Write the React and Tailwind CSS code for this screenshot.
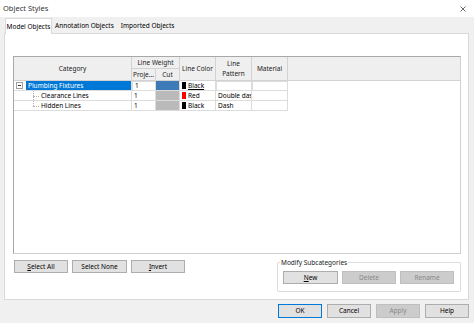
import React from "react";

function Btn({ children, className = "", disabled = false, primary = false }) {
  return (
    <div
      className={
        "flex items-center justify-center border " +
        (disabled
          ? "bg-[#cccccc] border-[#bfbfbf] text-[#8a8a8a] "
          : primary
          ? "bg-[#e1e1e1] border-[#0078d7] text-black "
          : "bg-[#e1e1e1] border-[#adadad] text-black ") +
        className
      }
    >
      {children}
    </div>
  );
}

function H({ children, className = "" }) {
  return (
    <div
      className={
        "bg-[#efefef] border-r border-b border-[#d2d2d2] flex items-center justify-center text-center leading-[8px] text-[#222] overflow-hidden " +
        className
      }
    >
      {children}
    </div>
  );
}

function C({ children, className = "" }) {
  return (
    <div
      className={
        "border-r border-b border-[#dcdcdc] flex items-center overflow-hidden whitespace-nowrap " +
        className
      }
    >
      {children}
    </div>
  );
}

function Swatch({ color }) {
  return <div className={"w-[4px] h-[7px] ml-[2px] mr-[2px] shrink-0 " + color} />;
}

export default function App() {
  return (
    <div className="w-[474px] h-[323px] overflow-hidden bg-[#f0f0f0] flex flex-col font-['Noto_Sans',sans-serif] text-[6.5px] text-black">
      {/* title bar */}
      <div className="h-[17px] bg-white flex items-center justify-between pl-[3px] pr-[8px] shrink-0">
        <span className="text-[7.5px] text-[#333]">Object Styles</span>
        <svg width="6" height="6" viewBox="0 0 6 6">
          <path d="M0.5 0.5 L5.5 5.5 M5.5 0.5 L0.5 5.5" stroke="#444" strokeWidth="0.8" />
        </svg>
      </div>

      {/* tabs */}
      <div className="h-[16px] flex items-end pl-[5px] shrink-0">
        <div className="h-[16px] w-[47px] bg-white border border-b-0 border-[#d9d9d9] flex items-center justify-center relative top-[1px]">
          Model Objects
        </div>
        <div className="h-[15px] px-[3px] flex items-center">Annotation Objects</div>
        <div className="h-[15px] px-[4px] flex items-center">Imported Objects</div>
      </div>

      {/* panel */}
      <div className="ml-[4px] w-[465px] h-[267px] bg-white border border-[#d9d9d9] pl-[8px] pt-[22px] shrink-0">
        <div className="w-[448px] h-[198px] border border-[#a8a8a8] border-r-[#d0d0d0] border-b-[#d0d0d0]">
          <div className="grid grid-cols-[118px_24px_24px_36px_36px_36px_1fr] grid-rows-[12px_12px_10px_10px_10px]">
            <H className="row-span-2">Category</H>
            <H className="col-span-2">Line Weight</H>
            <H className="row-span-2">Line Color</H>
            <H className="row-span-2 flex-col gap-[2px]">
              <span className="leading-[8px]">Line</span>
              <span className="leading-[8px]">Pattern</span>
            </H>
            <H className="row-span-2">Material</H>
            <H className="row-span-2 border-r-0" />
            <H className="justify-start pl-[1px]">Proje...</H>
            <H>Cut</H>

            {/* row 1 */}
            <C>
              <div className="w-[7px] h-[7px] ml-[2px] border border-[#a0a0a0] bg-white flex items-center justify-center shrink-0">
                <div className="w-[3px] h-[1px] bg-[#333]" />
              </div>
              <div className="ml-[3px] h-full flex-1 bg-[#0078d7] text-white flex items-center pl-[2px]">
                Plumbing Fixtures
              </div>
            </C>
            <C className="border border-[#5b9bd5] pl-[2px]">1</C>
            <C className="bg-[#3d7bb8]" />
            <C>
              <Swatch color="bg-black" />
              <span className="underline">Black</span>
            </C>
            <C className="border border-[#5b9bd5]" />
            <C className="border border-[#5b9bd5]" />
            <div />

            {/* row 2 */}
            <C className="relative">
              <div className="absolute left-[19px] top-0 h-full border-l border-dotted border-[#b0b0b0]" />
              <div className="absolute left-[19px] top-[5px] w-[6px] border-t border-dotted border-[#b0b0b0]" />
              <span className="pl-[27px]">Clearance Lines</span>
            </C>
            <C className="pl-[2px]">1</C>
            <C className="bg-[#bababa]" />
            <C>
              <Swatch color="bg-[#ff0000]" />
              <span>Red</span>
            </C>
            <C className="pl-[2px]">Double dash</C>
            <C />
            <div />

            {/* row 3 */}
            <C className="relative">
              <div className="absolute left-[19px] top-0 h-[5px] border-l border-dotted border-[#b0b0b0]" />
              <div className="absolute left-[19px] top-[5px] w-[6px] border-t border-dotted border-[#b0b0b0]" />
              <span className="pl-[27px]">Hidden Lines</span>
            </C>
            <C className="pl-[2px]">1</C>
            <C className="bg-[#bababa]" />
            <C>
              <Swatch color="bg-black" />
              <span>Black</span>
            </C>
            <C className="pl-[2px]">Dash</C>
            <C />
            <div />
          </div>
        </div>

        {/* lower controls */}
        <div className="w-[448px] flex justify-between items-start">
          <div className="flex gap-[4px] ml-[1px] mt-[6px]">
            <Btn className="w-[54px] h-[13px]">
              <span><span className="underline">S</span>elect All</span>
            </Btn>
            <Btn className="w-[55px] h-[13px]">Select None</Btn>
            <Btn className="w-[54px] h-[13px]">
              <span><span className="underline">I</span>nvert</span>
            </Btn>
          </div>
          <div className="mt-[8px] w-[184px] h-[30px] border border-[#dcdcdc] rounded-[2px] relative pl-[5px] pt-[8px]">
            <span className="absolute left-[2px] top-[-5px] bg-white px-[1px] text-[#222]">Modify Subcategories</span>
            <div className="flex gap-[4px]">
              <Btn className="w-[55px] h-[13px]">
                <span><span className="underline">N</span>ew</span>
              </Btn>
              <Btn disabled className="w-[54px] h-[13px]">Delete</Btn>
              <Btn disabled className="w-[54px] h-[13px]">Rename</Btn>
            </div>
          </div>
        </div>
      </div>

      {/* bottom bar */}
      <div className="flex-1 flex justify-end items-start pt-[4px] pr-[5px] gap-[5px]">
        <Btn primary className="w-[44px] h-[14px]">OK</Btn>
        <Btn className="w-[44px] h-[14px]">Cancel</Btn>
        <Btn disabled className="w-[44px] h-[14px]">Apply</Btn>
        <Btn className="w-[44px] h-[14px]">Help</Btn>
      </div>
    </div>
  );
}
